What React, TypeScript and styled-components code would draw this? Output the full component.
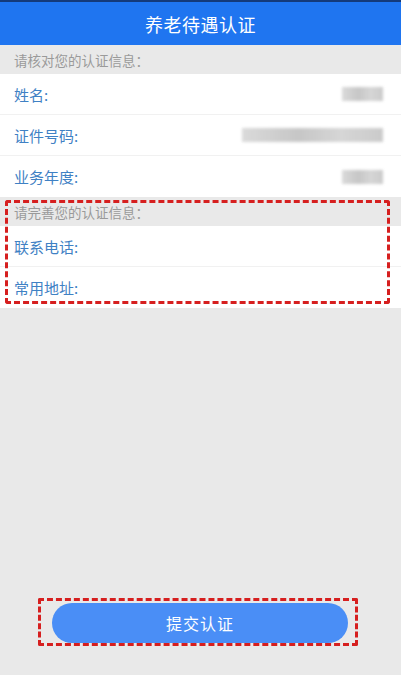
import React from 'react';
import styled, { createGlobalStyle } from 'styled-components';

const GlobalStyle = createGlobalStyle`
  html, body {
    margin: 0;
    padding: 0;
    background: #e9e9e9;
    font-family: "Noto Sans CJK SC", "Noto Sans", sans-serif;
  }
  * { box-sizing: border-box; }
`;

const Page = styled.div`
  display: flex;
  flex-direction: column;
  height: 100vh;
  background: #e9e9e9;
  border-top: 2px solid #143a7a;
`;

const Header = styled.header`
  height: 43px;
  background: #1f75f0;
  color: #fff;
  font-size: 18px;
  display: flex;
  align-items: center;
  justify-content: center;
  letter-spacing: 0.5px;
`;

const Section = styled.section<{ $marked?: boolean }>`
  position: relative;
  &::after {
    content: "";
    display: ${(p) => (p.$marked ? 'block' : 'none')};
    position: absolute;
    left: 5px;
    right: 11px;
    top: 3px;
    bottom: 4px;
    border: 3px dashed #d61f1f;
    border-radius: 3px;
    pointer-events: none;
  }
`;

const SectionTitle = styled.div`
  height: 29px;
  padding-left: 14px;
  display: flex;
  align-items: center;
  font-size: 13.5px;
  color: #9a9a9a;
  background: #e9e9e9;
`;

const Row = styled.div`
  height: 41px;
  padding: 0 18px 0 14px;
  display: flex;
  align-items: center;
  justify-content: space-between;
  background: #fff;
  border-bottom: 1px solid #f1f1f1;
  &:last-child { border-bottom: none; }
`;

const Label = styled.span`
  font-size: 15px;
  color: #3f81c4;
`;

const Masked = styled.span<{ $w: number }>`
  width: ${(p) => p.$w}px;
  height: 14px;
  background: linear-gradient(90deg, #d4d4d4, #bdbdbd 40%, #cfcfcf 70%, #c2c2c2);
  filter: blur(1.5px);
  opacity: 0.85;
`;

const Footer = styled.div`
  margin-top: auto;
  padding: 0 53px 32px 52px;
`;

const ButtonFrame = styled.div`
  position: relative;
  &::after {
    content: "";
    position: absolute;
    left: -14px;
    right: -10px;
    top: -5px;
    bottom: -3px;
    border: 3px dashed #d61f1f;
    border-radius: 2px;
    pointer-events: none;
  }
`;

const SubmitButton = styled.button`
  width: 100%;
  height: 40px;
  border: none;
  border-radius: 20px;
  background: #4a8ef6;
  color: #fff;
  font-family: inherit;
  font-size: 16px;
  letter-spacing: 1px;
`;

const checkRows = [
  { label: '姓名:', w: 41 },
  { label: '证件号码:', w: 141 },
  { label: '业务年度:', w: 41 },
];

const fillRows = ['联系电话:', '常用地址:'];

export default function App() {
  return (
    <>
      <GlobalStyle />
      <Page>
        <Header>养老待遇认证</Header>
        <Section>
          <SectionTitle>请核对您的认证信息：</SectionTitle>
          {checkRows.map((r) => (
            <Row key={r.label}>
              <Label>{r.label}</Label>
              <Masked $w={r.w} />
            </Row>
          ))}
        </Section>
        <Section $marked>
          <SectionTitle>请完善您的认证信息：</SectionTitle>
          {fillRows.map((l) => (
            <Row key={l}>
              <Label>{l}</Label>
            </Row>
          ))}
        </Section>
        <Footer>
          <ButtonFrame>
            <SubmitButton>提交认证</SubmitButton>
          </ButtonFrame>
        </Footer>
      </Page>
    </>
  );
}
